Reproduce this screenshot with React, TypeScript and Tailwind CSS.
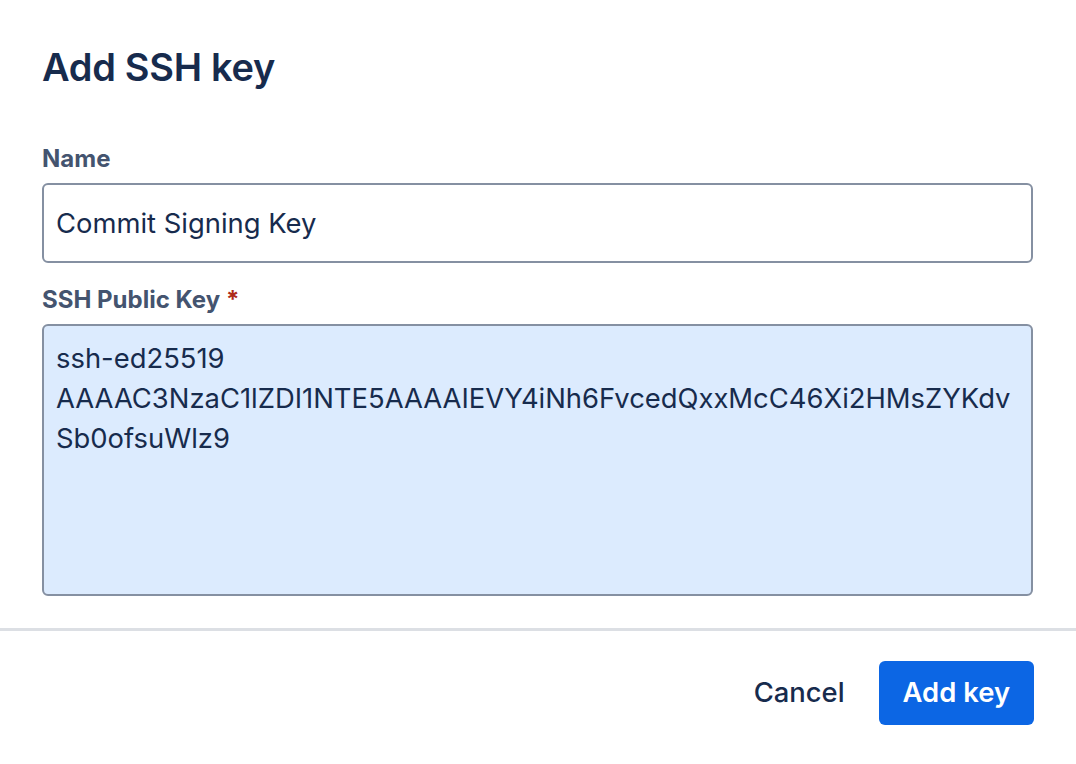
export default function App() {
  return (
    <div
      className="flex h-[764px] w-full flex-col bg-white text-[#172b4d]"
      style={{ fontFamily: 'Inter, "Noto Sans", sans-serif' }}
    >
      <div className="pl-[42px] pr-[43px] pt-[43px]">
        <h1 className="text-[38px] font-semibold leading-[48px] tracking-[-0.3px]">
          Add SSH key
        </h1>

        <div className="mt-[52px]">
          <label className="block text-[24px] font-bold leading-[32px] text-[#44546f]">
            Name
          </label>
          <div className="mt-2 flex h-[80px] items-center rounded-[6px] border-2 border-[#8590a2] bg-white px-[12px]">
            <span className="text-[27.4px] leading-[40px]">Commit Signing Key</span>
          </div>
        </div>

        <div className="mt-[21px]">
          <label className="block text-[24px] font-bold leading-[32px] text-[#44546f]">
            SSH Public Key
            <span className="ml-[6px] text-[#ae2a19]">*</span>
          </label>
          <div className="mt-2 h-[272px] rounded-[6px] border-2 border-[#8590a2] bg-[#dcebfe] px-[12px] pt-[12px] text-[27.4px] leading-[40px]">
            <div>ssh-ed25519</div>
            <div>AAAAC3NzaC1lZDI1NTE5AAAAIEVY4iNh6FvcedQxxMcC46Xi2HMsZYKdv</div>
            <div>Sb0ofsuWlz9</div>
          </div>
        </div>
      </div>

      <div className="mt-[32px] h-[3px] w-full bg-[#dcdfe4]" />

      <div className="flex justify-end gap-[10px] pr-[42px] pt-[30px]">
        <button className="h-[64px] rounded-[6px] px-[24px] text-[27.4px] font-medium text-[#172b4d]">
          Cancel
        </button>
        <button className="h-[64px] rounded-[6px] bg-[#0c66e4] px-[24px] text-[27.4px] font-semibold text-white">
          Add key
        </button>
      </div>
    </div>
  );
}
